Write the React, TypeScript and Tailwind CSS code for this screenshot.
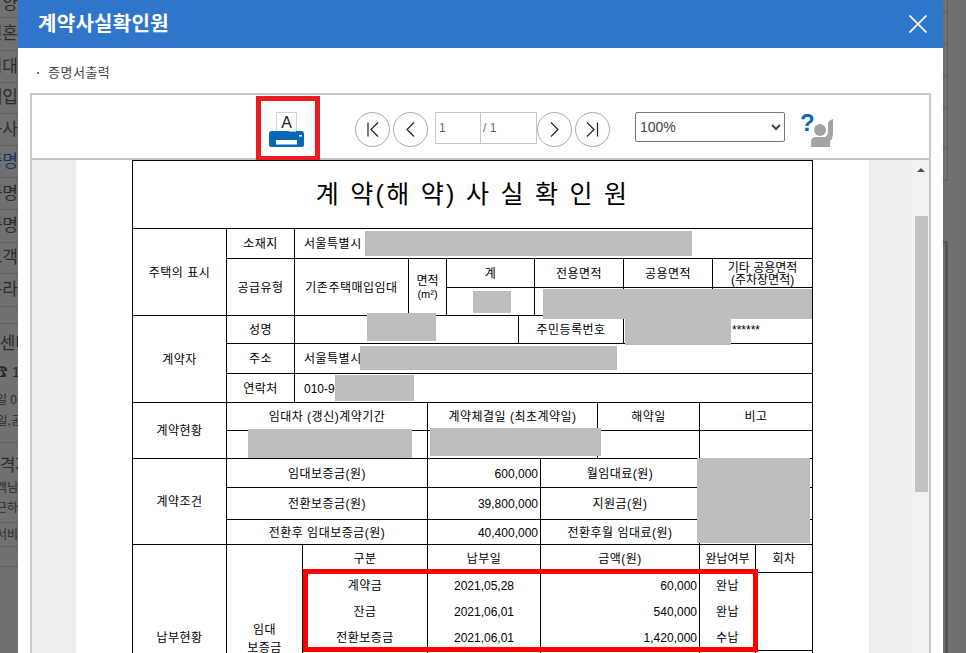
import * as React from "react";

const FONT = "font-['Liberation_Sans','Noto_Sans_CJK_KR',sans-serif]";

type TdProps = React.TdHTMLAttributes<HTMLTableCellElement>;

function Td({ className = "", children, ...rest }: TdProps) {
    return (
        <td className={`border border-black p-0 pt-[2px] text-center align-middle ${className}`} {...rest}>
            {children}
        </td>
    );
}

const COLS = [94, 68, 8, 106, 19, 19, 72, 16, 6, 57, 26, 76, 13, 43, 57];

const PATCHES = [
    "left-[233px] top-[71px] w-[327px] h-[25px]",
    "left-[341px] top-[131px] w-[38px] h-[22px]",
    "left-[411px] top-[129px] w-[269px] h-[30px]",
    "left-[493px] top-[159px] w-[106px] h-[26px]",
    "left-[235px] top-[153px] w-[69px] h-[28px]",
    "left-[228px] top-[186px] w-[257px] h-[24px]",
    "left-[203px] top-[215px] w-[79px] h-[26px]",
    "left-[116px] top-[269px] w-[164px] h-[29px]",
    "left-[298px] top-[268px] w-[171px] h-[28px]",
    "left-[565px] top-[298px] w-[113px] h-[85px]",
];

function RoundButton({ children }: { children: React.ReactNode }) {
    return (
        <button className="flex h-[35px] w-[35px] items-center justify-center rounded-full border border-[#aaaaaa] bg-white">
            <svg width="21" height="21" viewBox="0 0 21 21" fill="none" stroke="#222222" strokeWidth="1.2">
                {children}
            </svg>
        </button>
    );
}

function PrinterIcon() {
    return (
        <svg width="35" height="35" viewBox="0 0 35 35">
            <rect x="7.5" y="0.5" width="20" height="20" fill="#ffffff" stroke="#d2d2d2" />
            <text x="17.5" y="16" textAnchor="middle" fontSize="16" fontFamily="Liberation Sans" fill="#222222">
                A
            </text>
            <path d="M0 22 Q0 19 3 19 L32 19 Q35 19 35 22 L35 33 Q35 35 33 35 L2 35 Q0 35 0 33 Z" fill="#0a67b5" />
            <rect x="7" y="28" width="21" height="4.5" fill="#ffffff" />
            <rect x="30" y="23" width="3" height="1.5" fill="#ffffff" />
            <rect x="20" y="17" width="7" height="2.5" fill="#ffffff" stroke="#d2d2d2" strokeWidth="0.5" />
        </svg>
    );
}

function HelpIcon() {
    return (
        <svg width="35" height="36" viewBox="0 0 35 36">
            <text x="0" y="20" fontSize="24" fontWeight="700" fontFamily="Liberation Sans" fill="#0a67b5">
                ?
            </text>
            <circle cx="20" cy="19" r="6" fill="#a3a3a3" />
            <path d="M11 36 L11 31 Q11 26 16 26 L24 26 Q27 26 28 22 L28 12 Q29 9 33 8 L33 21 Q33 28 30 30 L30 36 Z" fill="#a3a3a3" />
        </svg>
    );
}

function SideRow({ className, children }: { className: string; children?: React.ReactNode }) {
    return (
        <div className={`flex items-center justify-end overflow-hidden whitespace-nowrap border-b border-[#5e5e5e] text-[17px] text-[#2c2c2c] ${className}`}>
            {children}
        </div>
    );
}

export default function App() {
    return (
        <div className={`flex h-[653px] w-[966px] overflow-hidden bg-[#707070] ${FONT}`}>
            {/* page behind the dialog */}
            <div className="w-[18px] shrink-0 overflow-hidden">
                <SideRow className="h-[18px] !items-start">
                    <span className="mt-[-9px]">양</span>
                </SideRow>
                <SideRow className="h-[33px]">신혼</SideRow>
                <SideRow className="h-[32px]">임대</SideRow>
                <SideRow className="h-[31px]">매입</SideRow>
                <SideRow className="h-[32px]">공사</SideRow>
                <SideRow className="h-[32px] text-[#17365f]">증명</SideRow>
                <SideRow className="h-[32px]">증명</SideRow>
                <SideRow className="h-[33px]">증명</SideRow>
                <SideRow className="h-[31px]">고객</SideRow>
                <SideRow className="h-[33px]">온라</SideRow>
                <SideRow className="h-[17px]" />
                <div className="flex h-[119px] flex-col items-end overflow-hidden whitespace-nowrap border-b border-[#5e5e5e] pt-[8px] text-[#2c2c2c]">
                    <span className="mr-[-13px] text-[17px] leading-[24px]">센터</span>
                    <span className="mr-[-2px] mt-[6px] text-[15px] leading-[20px]">☎ 1</span>
                    <span className="mr-[1px] mt-[11px] text-[12px] leading-[14px]">일 0</span>
                    <span className="mr-[-4px] mt-[7px] text-[12px] leading-[14px]">일,공</span>
                </div>
                <div className="flex h-[80px] flex-col items-end overflow-hidden whitespace-nowrap border-b border-[#5e5e5e] pt-[11px] text-[#2c2c2c]">
                    <span className="mr-[-13px] text-[17px] leading-[24px]">격자</span>
                    <span className="text-[12px] leading-[20px]">객님</span>
                    <span className="text-[12px] leading-[20px]">근하</span>
                </div>
                <SideRow className="h-[24px] !text-[12px]">서비</SideRow>
                <SideRow className="h-[20px]" />
            </div>

            {/* dialog */}
            <div className="flex h-full w-[925px] shrink-0 flex-col bg-white">
                <div className="flex h-12 shrink-0 items-center justify-between bg-[#2f75cc] pl-5 pr-4">
                    <h1 className="text-[20px] font-bold tracking-[0.3px] text-white">계약사실확인원</h1>
                    <svg className="mt-[-1px]" width="18" height="18" viewBox="0 0 18 18" fill="none" stroke="#ffffff" strokeWidth="1.7">
                        <path d="M0.5 0.5 L17.5 17.5 M17.5 0.5 L0.5 17.5" />
                    </svg>
                </div>

                <div className="flex h-[45px] shrink-0 items-center pl-[19px] pt-[5px] text-[13px] tracking-[0.5px] text-[#444444]">
                    <span className="mr-[9px] h-[2px] w-[2px] bg-[#777777]" />
                    증명서출력
                </div>

                {/* report viewer */}
                <div className="ml-3 flex min-h-0 w-[901px] flex-1 flex-col border-2 border-b-0 border-[#c8c8c8]">
                    <div className="relative flex h-[65px] shrink-0 items-start border-b-2 border-[#c4c4c4] pl-[237px] pt-[17px]">
                        <PrinterIcon />
                        <div className="pointer-events-none absolute left-[224px] top-[1px] h-[65px] w-[64px] border-[5px] border-[#ed1c24]" />
                        <div className="ml-[51px] flex items-start gap-[3px]">
                            <RoundButton>
                                <path d="M6 3.5 V17.5 M16 3.5 L9 10.5 L16 17.5" />
                            </RoundButton>
                            <RoundButton>
                                <path d="M14 3.5 L7 10.5 L14 17.5" />
                            </RoundButton>
                            <div className="ml-[4px] mr-[-3px] flex h-[32px] w-[102px] border border-[#c8c8c8] text-[12px] text-[#666666]">
                                <span className="flex w-[45px] items-center border-r border-[#c8c8c8] pl-[3px]">1</span>
                                <span className="flex items-center pl-[2px]">/ 1</span>
                            </div>
                            <RoundButton>
                                <path d="M7 3.5 L14 10.5 L7 17.5" />
                            </RoundButton>
                            <RoundButton>
                                <path d="M5 3.5 L12 10.5 L5 17.5 M15.5 3.5 V17.5" />
                            </RoundButton>
                        </div>
                        <select
                            defaultValue="100%"
                            className="ml-[25px] h-[30px] w-[150px] rounded-[2px] border border-[#767676] bg-white text-[14px] text-[#444444]"
                        >
                            <option>100%</option>
                        </select>
                        <div className="ml-[15px] mt-[-1px]">
                            <HelpIcon />
                        </div>
                    </div>

                    <div className="flex min-h-0 flex-1 overflow-hidden bg-[#eeeeee]">
                        <div className="ml-[44px] w-[793px] shrink-0 bg-white pl-[56px]">
                            <div className="relative w-[681px] text-[12px] leading-[13px] tracking-[0.5px] text-black">
                                <table className="w-[681px] table-fixed border-collapse">
                                    <colgroup>
                                        {COLS.map((w, i) => (
                                            <col key={i} style={{ width: w }} />
                                        ))}
                                    </colgroup>
                                    <tbody>
                                        <tr className="h-[68px]">
                                            <Td colSpan={15} className="!pt-0 text-[25px] leading-none tracking-[2.3px]">
                                                계 약(해 약) 사 실 확 인 원
                                            </Td>
                                        </tr>
                                        <tr className="h-[30px]">
                                            <Td rowSpan={3}>주택의 표시</Td>
                                            <Td>소재지</Td>
                                            <Td colSpan={13} className="pl-[9px] !text-left">서울특별시</Td>
                                        </tr>
                                        <tr className="h-[29px]">
                                            <Td rowSpan={2}>공급유형</Td>
                                            <Td rowSpan={2} colSpan={2}>기존주택매입임대</Td>
                                            <Td rowSpan={2} colSpan={2} className="tracking-normal">
                                                면적
                                                <br />
                                                <span className="text-[11px]">(m²)</span>
                                            </Td>
                                            <Td colSpan={2}>계</Td>
                                            <Td colSpan={3}>전용면적</Td>
                                            <Td colSpan={2}>공용면적</Td>
                                            <Td colSpan={2} className="leading-[12px] tracking-normal">
                                                기타 공용면적
                                                <br />
                                                (주차장면적)
                                            </Td>
                                        </tr>
                                        <tr className="h-[28px]">
                                            <Td colSpan={2} />
                                            <Td colSpan={3} />
                                            <Td colSpan={2} />
                                            <Td colSpan={2} />
                                        </tr>
                                        <tr className="h-[28px]">
                                            <Td rowSpan={3}>계약자</Td>
                                            <Td>성명</Td>
                                            <Td colSpan={5} />
                                            <Td colSpan={4}>주민등록번호</Td>
                                            <Td colSpan={4} className="pl-[108px] !text-left tracking-normal">******</Td>
                                        </tr>
                                        <tr className="h-[30px]">
                                            <Td>주소</Td>
                                            <Td colSpan={13} className="pl-[9px] !text-left">서울특별시</Td>
                                        </tr>
                                        <tr className="h-[29px]">
                                            <Td>연락처</Td>
                                            <Td colSpan={13} className="pl-[9px] !text-left tracking-normal">010-9</Td>
                                        </tr>
                                        <tr className="h-[28px]">
                                            <Td rowSpan={2}>계약현황</Td>
                                            <Td colSpan={4}>임대차 (갱신)계약기간</Td>
                                            <Td colSpan={5}>계약체결일 (최초계약일)</Td>
                                            <Td colSpan={2}>해약일</Td>
                                            <Td colSpan={3}>비고</Td>
                                        </tr>
                                        <tr className="h-[28px]">
                                            <Td colSpan={4} />
                                            <Td colSpan={5} />
                                            <Td colSpan={2} />
                                            <Td colSpan={3} />
                                        </tr>
                                        <tr className="h-[29px]">
                                            <Td rowSpan={3}>계약조건</Td>
                                            <Td colSpan={4}>임대보증금(원)</Td>
                                            <Td colSpan={4} className="pr-[2px] !text-right tracking-normal">600,000</Td>
                                            <Td colSpan={3}>월임대료(원)</Td>
                                            <Td colSpan={3} />
                                        </tr>
                                        <tr className="h-[32px]">
                                            <Td colSpan={4}>전환보증금(원)</Td>
                                            <Td colSpan={4} className="pr-[2px] !text-right tracking-normal">39,800,000</Td>
                                            <Td colSpan={3}>지원금(원)</Td>
                                            <Td colSpan={3} />
                                        </tr>
                                        <tr className="h-[25px]">
                                            <Td colSpan={4}>전환후 임대보증금(원)</Td>
                                            <Td colSpan={4} className="pr-[2px] !text-right tracking-normal">40,400,000</Td>
                                            <Td colSpan={3}>전환후월 임대료(원)</Td>
                                            <Td colSpan={3} />
                                        </tr>
                                        <tr className="h-[28px]">
                                            <Td rowSpan={5}>납부현황</Td>
                                            <Td rowSpan={5} colSpan={2} className="leading-[18px]">
                                                임대
                                                <br />
                                                보증금
                                            </Td>
                                            <Td colSpan={2}>구분</Td>
                                            <Td colSpan={4}>납부일</Td>
                                            <Td colSpan={3}>금액(원)</Td>
                                            <Td colSpan={2} className="tracking-normal">완납여부</Td>
                                            <Td>회차</Td>
                                        </tr>
                                        <tr className="h-[26px]">
                                            <Td colSpan={2} className="border-b-0">계약금</Td>
                                            <Td colSpan={4} className="border-b-0 tracking-normal">2021,05,28</Td>
                                            <Td colSpan={3} className="border-b-0 pr-[2px] !text-right tracking-normal">60,000</Td>
                                            <Td colSpan={2} className="border-b-0">완납</Td>
                                            <Td className="border-b-0" />
                                        </tr>
                                        <tr className="h-[26px]">
                                            <Td colSpan={2} className="border-y-0">잔금</Td>
                                            <Td colSpan={4} className="border-y-0 tracking-normal">2021,06,01</Td>
                                            <Td colSpan={3} className="border-y-0 pr-[2px] !text-right tracking-normal">540,000</Td>
                                            <Td colSpan={2} className="border-y-0">완납</Td>
                                            <Td className="border-y-0" />
                                        </tr>
                                        <tr className="h-[26px]">
                                            <Td colSpan={2} className="border-t-0">전환보증금</Td>
                                            <Td colSpan={4} className="border-t-0 tracking-normal">2021,06,01</Td>
                                            <Td colSpan={3} className="border-t-0 pr-[2px] !text-right tracking-normal">1,420,000</Td>
                                            <Td colSpan={2} className="border-t-0">수납</Td>
                                            <Td className="border-t-0" />
                                        </tr>
                                        <tr className="h-[80px]">
                                            <Td colSpan={2} />
                                            <Td colSpan={4} />
                                            <Td colSpan={3} />
                                            <Td colSpan={2} />
                                            <Td />
                                        </tr>
                                    </tbody>
                                </table>

                                {/* blacked out personal data */}
                                {PATCHES.map((p) => (
                                    <div key={p} className={`absolute bg-[#bebebe] ${p}`} />
                                ))}
                                <div className="absolute left-[171px] top-[409px] h-[83px] w-[455px] border-[5px] border-[#ff0000]" />
                            </div>
                        </div>

                        <div className="ml-[43px] flex w-[17px] shrink-0 flex-col items-center bg-[#f1f1f1]">
                            <span className="mt-[8px] h-0 w-0 border-x-[4px] border-b-[4px] border-x-transparent border-b-[#505050]" />
                            <div className="ml-[1px] mt-[44px] h-[276px] w-[13px] bg-[#c1c1c1]" />
                        </div>
                    </div>
                </div>
            </div>

            {/* page behind the dialog, right edge */}
            <div className="flex-1 overflow-hidden">
                <div className="w-[5px] border-r border-[#5e5e5e]">
                    <div className="h-[13px] border-b border-[#5e5e5e]" />
                    <div className="h-[31px] border-b border-[#5e5e5e]" />
                    <div className="h-[32px] border-b border-[#5e5e5e]" />
                    <div className="h-[32px] border-b border-[#5e5e5e]" />
                    <div className="h-[41px] border-b border-[#5e5e5e]" />
                    <div className="h-[32px] border-b border-[#5e5e5e]" />
                </div>
                <div className="mt-[60px] h-[412px] w-[5px] border-r-[3px] border-t-2 border-[#555555]" />
            </div>
        </div>
    );
}
